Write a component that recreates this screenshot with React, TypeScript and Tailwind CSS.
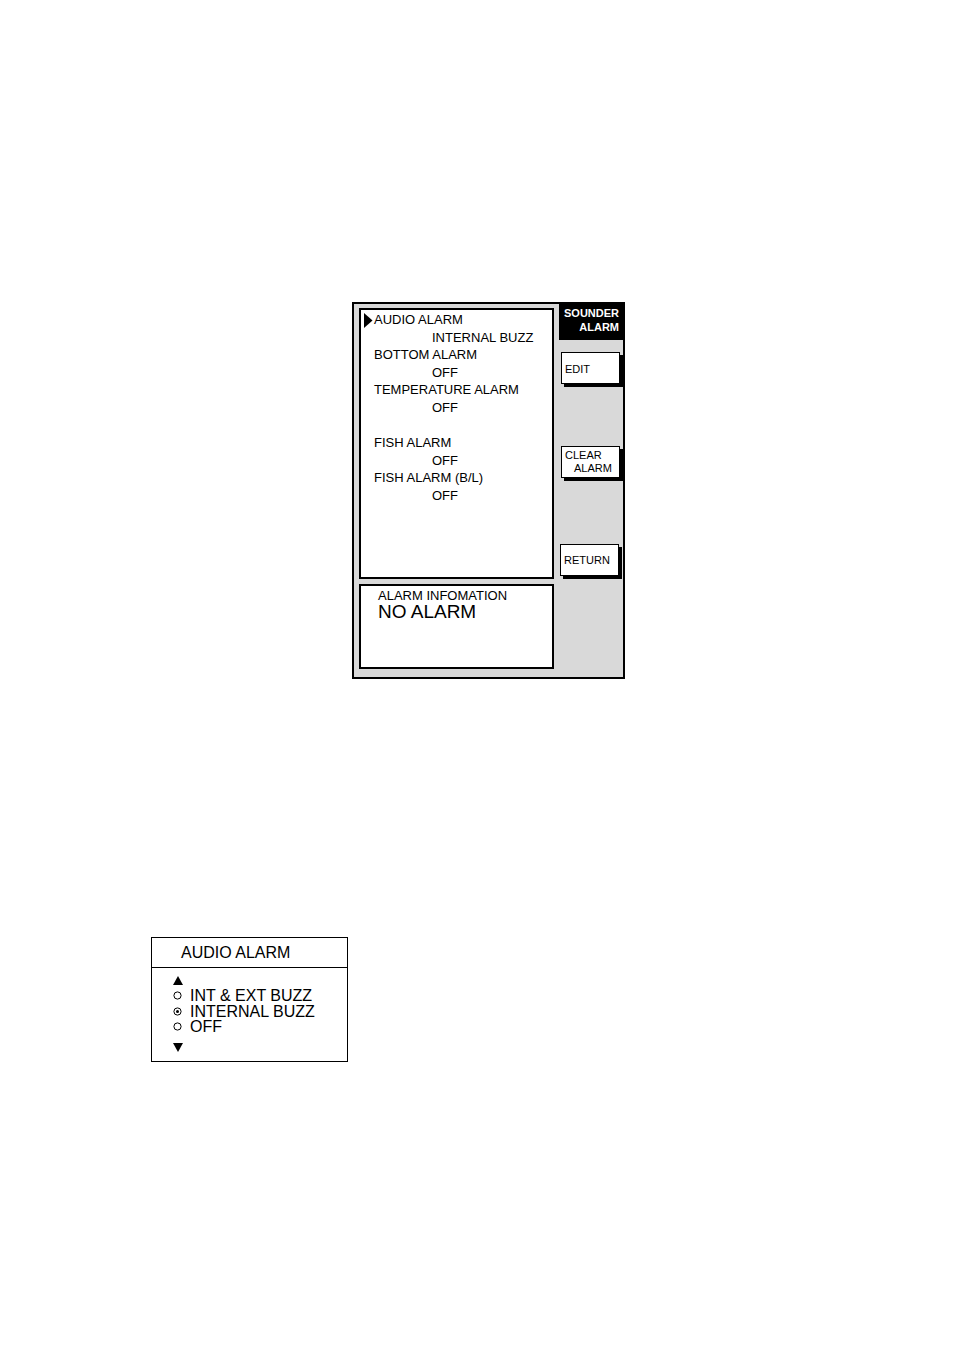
const menuRows: { text: string; value?: boolean; pointer?: boolean }[] = [
  { text: "AUDIO ALARM", pointer: true },
  { text: "INTERNAL BUZZ", value: true },
  { text: "BOTTOM ALARM" },
  { text: "OFF", value: true },
  { text: "TEMPERATURE ALARM" },
  { text: "OFF", value: true },
  { text: "" },
  { text: "FISH ALARM" },
  { text: "OFF", value: true },
  { text: "FISH ALARM (B/L)" },
  { text: "OFF", value: true },
];

function Pointer() {
  return (
    <svg width="9" height="15" viewBox="0 0 9 15" className="mt-[2px]">
      <path d="M0 0 L8.5 7.5 L0 15 Z" fill="#000" />
    </svg>
  );
}

function SoftKey({ children, className = "" }: { children: React.ReactNode; className?: string }) {
  return (
    <div
      className={`w-[59px] h-[32px] bg-white border border-black shadow-[3px_3px_0_#000] text-[11px] leading-[13px] text-black pl-[3px] flex flex-col justify-center ${className}`}
    >
      {children}
    </div>
  );
}

function Radio({ on }: { on?: boolean }) {
  return (
    <svg width="9" height="9" viewBox="0 0 9 9" className="shrink-0">
      <circle cx="4.5" cy="4.5" r="3.6" fill="none" stroke="#000" strokeWidth="1" />
      {on && <circle cx="4.5" cy="4.5" r="1.5" fill="#000" />}
    </svg>
  );
}

export default function App() {
  return (
    <div
      className="min-h-screen bg-white text-black"
      style={{ fontFamily: '"Liberation Sans", Arial, Helvetica, sans-serif' }}
    >
      <div className="pt-[302px] pl-[352px]">
        {/* sounder alarm menu */}
        <div className="w-[273px] h-[377px] border-2 border-black bg-[#d9d9d9] flex">
          <div className="pl-[5px] pt-[4px] flex flex-col gap-[5px]">
            <div className="w-[195px] h-[271px] border-2 border-black bg-white pt-px text-[13px] leading-[17.6px]">
              {menuRows.map((r, i) => (
                <div key={i} className="flex h-[17.6px]">
                  <div className="w-[13px] pl-[3px] shrink-0">{r.pointer && <Pointer />}</div>
                  <span className={r.value ? "pl-[58px]" : ""}>{r.text}</span>
                </div>
              ))}
            </div>
            <div className="w-[195px] h-[85px] border-2 border-black bg-white pl-[17px] pt-[2px]">
              <div className="text-[13px] leading-[15px]">ALARM INFOMATION</div>
              <div className="text-[19px] leading-[19px] -mt-px">NO ALARM</div>
            </div>
          </div>
          <div className="flex-1 ml-[5px] flex flex-col">
            <div className="h-[36px] bg-black text-white font-bold text-[11px] leading-[14px] text-right pr-[4px] pt-[2px]">
              <div>SOUNDER</div>
              <div>ALARM</div>
            </div>
            <SoftKey className="mt-[12px] ml-[2px] pt-[3px]">EDIT</SoftKey>
            <SoftKey className="mt-[62px] ml-[2px]">
              <div>CLEAR</div>
              <div className="pl-[9px]">ALARM</div>
            </SoftKey>
            <SoftKey className="mt-[66px] ml-[1px]">RETURN</SoftKey>
          </div>
        </div>
      </div>

      {/* audio alarm option window */}
      <div className="mt-[258px] ml-[151px] w-[197px] h-[125px] border border-black">
        <div className="h-[30px] border-b border-black pl-[29px] flex items-center text-[16px]">
          AUDIO ALARM
        </div>
        <div className="pl-[21px] pt-[5px] text-[16px] leading-[15.5px]">
          <div className="h-[15px] flex items-center">
            <svg width="10" height="9" viewBox="0 0 10 9">
              <path d="M5 0 L10 9 L0 9 Z" fill="#000" />
            </svg>
          </div>
          {[
            { t: "INT & EXT BUZZ" },
            { t: "INTERNAL BUZZ", on: true },
            { t: "OFF" },
          ].map((o) => (
            <div key={o.t} className="flex items-center h-[15.5px]">
              <Radio on={o.on} />
              <span className="ml-[8px]">{o.t}</span>
            </div>
          ))}
          <div className="h-[17px] flex items-end">
            <svg width="10" height="9" viewBox="0 0 10 9">
              <path d="M0 0 L10 0 L5 9 Z" fill="#000" />
            </svg>
          </div>
        </div>
      </div>
    </div>
  );
}
